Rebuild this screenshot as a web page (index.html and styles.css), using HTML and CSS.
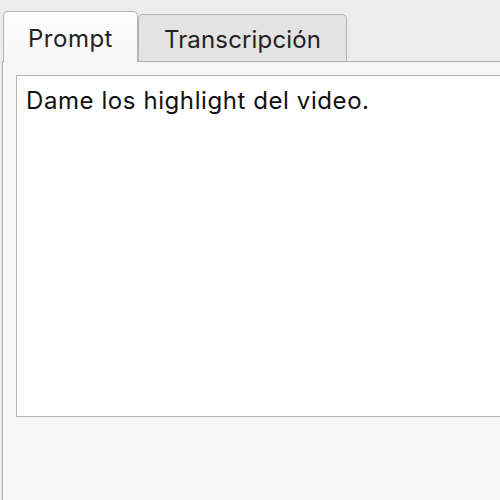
FILE: index.html
```html
<!DOCTYPE html>
<html lang="es">
<head>
<meta charset="utf-8">
<title>Prompt</title>
<link rel="stylesheet" href="styles.css">
</head>
<body>
<div class="window">
  <div class="tabs">
    <div class="tab tab-active">Prompt</div>
    <div class="tab tab-inactive">Transcripción</div>
  </div>
  <div class="panel">
    <div class="editor">Dame los highlight del video.</div>
  </div>
</div>
</body>
</html>
```
FILE: styles.css
```css
html, body {
  margin: 0;
  padding: 0;
  height: 100%;
  overflow: hidden;
}
body {
  background: #ececec;
  font-family: Inter, "Liberation Sans", sans-serif;
  color: #1f1f1f;
}
.window {
  display: flex;
  flex-direction: column;
  height: 100%;
}
.tabs {
  display: flex;
  align-items: flex-end;
  height: 61px;
  padding-left: 3px;
}
.tab {
  box-sizing: border-box;
  text-align: center;
  font-size: 24px;
  line-height: 29px;
  letter-spacing: 0.3px;
  color: #222222;
  border: 1px solid #b3b3b3;
  border-bottom: none;
  border-radius: 5px 5px 0 0;
}
.tab-active {
  position: relative;
  z-index: 1;
  width: 135px;
  height: 51px;
  margin-bottom: -1px;
  padding-top: 12px;
  letter-spacing: 0.5px;
  background: linear-gradient(#fdfdfd, #f7f7f7);
}
.tab-inactive {
  width: 209px;
  height: 47px;
  padding-top: 10px;
  letter-spacing: 0.15px;
  background: #e3e3e3;
}
.panel {
  flex: 1;
  margin-left: 2px;
  border-top: 1px solid #ababab;
  border-left: 1px solid #ababab;
  background: #f6f6f6;
  padding: 13px 0 0 13px;
}
.editor {
  box-sizing: border-box;
  height: 342px;
  background: #ffffff;
  border: 1px solid #b5b5b5;
  border-right: none;
  padding: 10px 0 0 9px;
  font-size: 24px;
  line-height: 29px;
  letter-spacing: 0.58px;
  color: #111111;
}
```
